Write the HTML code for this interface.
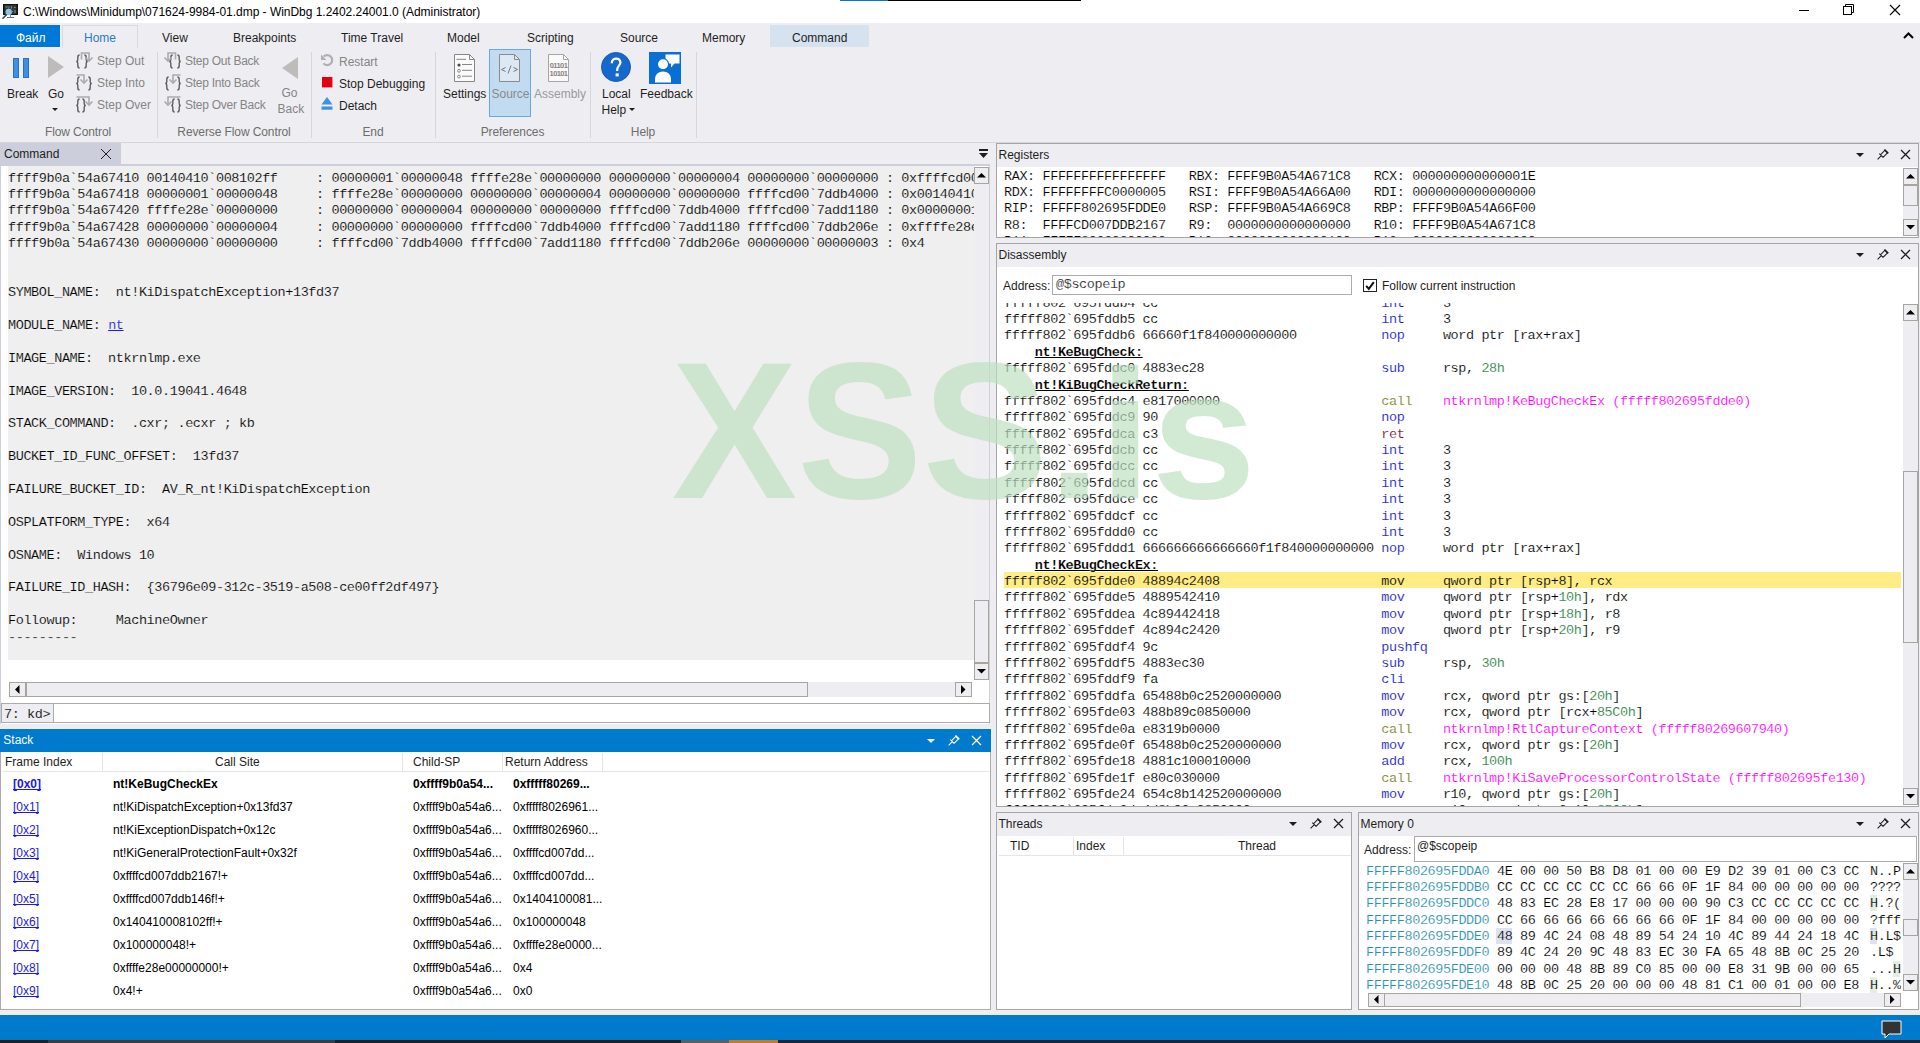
<!DOCTYPE html><html><head><meta charset="utf-8"><style>
*{margin:0;padding:0;box-sizing:border-box}
html,body{width:1920px;height:1043px;overflow:hidden;background:#EEEEF2;position:relative}
body{font-family:"Liberation Sans", sans-serif;font-size:12px;color:#1E1E1E}
.t{position:absolute;white-space:pre;line-height:16px}
.m{position:absolute;white-space:pre;font-family:"Liberation Mono", monospace;font-size:13.5px;letter-spacing:-0.4px;line-height:16px;color:#000;-webkit-text-stroke:0.15px var(--bg,#fff)}
.ab{position:absolute}
svg{position:absolute;overflow:visible}
.sb{position:absolute;background:#EEEEF2;border:1px solid #A9A59E}
</style></head><body>
<div class="ab" style="left:0px;top:0px;width:1920px;height:23px;background:#FFFFFF"></div>
<div class="ab" style="left:840px;top:0px;width:48px;height:1px;background:#0078D7"></div>
<div class="ab" style="left:888px;top:0px;width:193px;height:1px;background:#000"></div>
<svg style="left:0;top:0" width="22" height="22"><rect x="3" y="4" width="15" height="11" fill="#111"/><rect x="4.5" y="5" width="12" height="9" fill="#2E3A38"/><path d="M5.5 7H7.5M9 6.5V8.5M11.5 6.5V8.5M14 7.5H15.5M12 11.5H13M15 10V13" stroke="#9A9A9A" stroke-width="0.9"/><rect x="7" y="17" width="7" height="1" fill="#5A6E96"/><rect x="10" y="15" width="1" height="2" fill="#8090B0"/><circle cx="8.7" cy="12" r="3.2" fill="#8EC3E8"/><path d="M6.6 14.6L2.5 18.7" stroke="#444" stroke-width="1.5"/></svg>
<div class="t" style="left:23px;top:4px;color:#000;font-size:12px;letter-spacing:-0.03px">C:\Windows\Minidump\071624-9984-01.dmp - WinDbg 1.2402.24001.0 (Administrator)</div>
<div class="ab" style="left:1799px;top:10px;width:10px;height:1px;background:#000"></div>
<svg style="left:1843px;top:4px" width="12" height="12"><rect x="0.5" y="2.5" width="8" height="8" fill="none" stroke="#000"/><path d="M2.5 2.5V0.5H10.5V8.5H8.5" fill="none" stroke="#000"/></svg>
<svg style="left:1890px;top:5px" width="11" height="11"><path d="M0 0L10 10M10 0L0 10" stroke="#000" stroke-width="1.1"/></svg>
<div class="ab" style="left:0px;top:25px;width:60px;height:22px;background:#0078D7"></div>
<div class="t" style="left:16px;top:30px;color:#fff">Файл</div>
<div class="ab" style="left:62px;top:25px;width:76px;height:23px;background:#EEEEF2;border:1px solid #DADBE0;border-bottom:none"></div>
<div class="t" style="left:84px;top:30px;color:#2A7AC6">Home</div>
<div class="t" style="left:162px;top:30px;color:#1E1E1E">View</div>
<div class="t" style="left:233px;top:30px;color:#1E1E1E">Breakpoints</div>
<div class="t" style="left:341px;top:30px;color:#1E1E1E">Time Travel</div>
<div class="t" style="left:447px;top:30px;color:#1E1E1E">Model</div>
<div class="t" style="left:527px;top:30px;color:#1E1E1E">Scripting</div>
<div class="t" style="left:620px;top:30px;color:#1E1E1E">Source</div>
<div class="t" style="left:702px;top:30px;color:#1E1E1E">Memory</div>
<div class="ab" style="left:770px;top:25px;width:99px;height:22px;background:#D6E2F0"></div>
<div class="t" style="left:792px;top:30px;color:#1E1E1E">Command</div>
<svg style="left:1903px;top:32px" width="11" height="8"><path d="M1 6L5.5 1.5L10 6" fill="none" stroke="#000" stroke-width="2"/></svg>
<div class="ab" style="left:0px;top:142px;width:1920px;height:1px;background:#D6D6DC"></div>
<div class="ab" style="left:157px;top:52px;width:1px;height:86px;background:#D6D6DB"></div>
<div class="ab" style="left:311px;top:52px;width:1px;height:86px;background:#D6D6DB"></div>
<div class="ab" style="left:435px;top:52px;width:1px;height:86px;background:#D6D6DB"></div>
<div class="ab" style="left:590px;top:52px;width:1px;height:86px;background:#D6D6DB"></div>
<div class="ab" style="left:696px;top:52px;width:1px;height:86px;background:#D6D6DB"></div>
<div class="t" style="left:-22px;top:123.5px;width:200px;text-align:center;color:#6D6D6D;letter-spacing:-0.1px">Flow Control</div>
<div class="t" style="left:134px;top:123.5px;width:200px;text-align:center;color:#6D6D6D;letter-spacing:-0.1px">Reverse Flow Control</div>
<div class="t" style="left:273px;top:123.5px;width:200px;text-align:center;color:#6D6D6D;letter-spacing:-0.1px">End</div>
<div class="t" style="left:412.5px;top:123.5px;width:200px;text-align:center;color:#6D6D6D;letter-spacing:-0.1px">Preferences</div>
<div class="t" style="left:543px;top:123.5px;width:200px;text-align:center;color:#6D6D6D;letter-spacing:-0.1px">Help</div>
<div class="ab" style="left:13px;top:58px;width:6px;height:20px;background:#3D90E3;border:1px solid #2C6FBF"></div>
<div class="ab" style="left:23px;top:58px;width:6px;height:20px;background:#3D90E3;border:1px solid #2C6FBF"></div>
<div class="t" style="left:7px;top:85.5px;color:#1E1E1E">Break</div>
<svg style="left:48px;top:56px" width="17" height="23"><path d="M0 0L16 11L0 22Z" fill="#BEBBBB"/></svg>
<div class="t" style="left:48px;top:85.5px;color:#1E1E1E">Go</div>
<svg style="left:52px;top:108px" width="7" height="4"><path d="M0 0H6L3 3Z" fill="#1E1E1E"/></svg>
<svg style="left:0;top:0" width="1920" height="150"><g><path d="M79.6 55C78 55 77.8 56 77.8 57.5V59.8C77.8 60.9 77.2 61.5 76.2 61.5C77.2 61.5 77.8 62.1 77.8 63.2V65.5C77.8 67 78 68 79.6 68" fill="none" stroke="#5E5E5E" stroke-width="1.4"/><path d="M84.4 55C86 55 86.2 56 86.2 57.5V59.8C86.2 60.9 86.8 61.5 87.8 61.5C86.8 61.5 86.2 62.1 86.2 63.2V65.5C86.2 67 86 68 84.4 68" fill="none" stroke="#5E5E5E" stroke-width="1.4"/><path d="M81.5 59.5 L81.5 53 L89 53 L89 60" fill="none" stroke="#ABABAB" stroke-width="1.6"/><path d="M85.5 57.5L89 61L92.5 57.5" fill="none" stroke="#ABABAB" stroke-width="1.6"/><path d="M79.6 77C78 77 77.8 78 77.8 79.5V81.8C77.8 82.9 77.2 83.5 76.2 83.5C77.2 83.5 77.8 84.1 77.8 85.2V87.5C77.8 89 78 90 79.6 90" fill="none" stroke="#5E5E5E" stroke-width="1.4"/><path d="M88.4 77C90 77 90.2 78 90.2 79.5V81.8C90.2 82.9 90.8 83.5 91.8 83.5C90.8 83.5 90.2 84.1 90.2 85.2V87.5C90.2 89 90 90 88.4 90" fill="none" stroke="#5E5E5E" stroke-width="1.4"/><path d="M76.5 75 L84 75 L84 82" fill="none" stroke="#ABABAB" stroke-width="1.6"/><path d="M80.5 79.5L84 83L87.5 79.5" fill="none" stroke="#ABABAB" stroke-width="1.6"/><path d="M79.6 99C78 99 77.8 100 77.8 101.5V103.8C77.8 104.9 77.2 105.5 76.2 105.5C77.2 105.5 77.8 106.1 77.8 107.2V109.5C77.8 111 78 112 79.6 112" fill="none" stroke="#5E5E5E" stroke-width="1.4"/><path d="M82.4 99C84 99 84.2 100 84.2 101.5V103.8C84.2 104.9 84.8 105.5 85.8 105.5C84.8 105.5 84.2 106.1 84.2 107.2V109.5C84.2 111 84 112 82.4 112" fill="none" stroke="#5E5E5E" stroke-width="1.4"/><path d="M76.5 97 L89 97 L89 104" fill="none" stroke="#ABABAB" stroke-width="1.6"/><path d="M85.5 101.5L89 105L92.5 101.5" fill="none" stroke="#ABABAB" stroke-width="1.6"/></g></svg>
<svg style="left:0;top:0" width="1920" height="150"><g transform="translate(257,0) scale(-1,1)"><path d="M79.6 55C78 55 77.8 56 77.8 57.5V59.8C77.8 60.9 77.2 61.5 76.2 61.5C77.2 61.5 77.8 62.1 77.8 63.2V65.5C77.8 67 78 68 79.6 68" fill="none" stroke="#5E5E5E" stroke-width="1.4"/><path d="M84.4 55C86 55 86.2 56 86.2 57.5V59.8C86.2 60.9 86.8 61.5 87.8 61.5C86.8 61.5 86.2 62.1 86.2 63.2V65.5C86.2 67 86 68 84.4 68" fill="none" stroke="#5E5E5E" stroke-width="1.4"/><path d="M81.5 59.5 L81.5 53 L89 53 L89 60" fill="none" stroke="#ABABAB" stroke-width="1.6"/><path d="M85.5 57.5L89 61L92.5 57.5" fill="none" stroke="#ABABAB" stroke-width="1.6"/><path d="M79.6 77C78 77 77.8 78 77.8 79.5V81.8C77.8 82.9 77.2 83.5 76.2 83.5C77.2 83.5 77.8 84.1 77.8 85.2V87.5C77.8 89 78 90 79.6 90" fill="none" stroke="#5E5E5E" stroke-width="1.4"/><path d="M88.4 77C90 77 90.2 78 90.2 79.5V81.8C90.2 82.9 90.8 83.5 91.8 83.5C90.8 83.5 90.2 84.1 90.2 85.2V87.5C90.2 89 90 90 88.4 90" fill="none" stroke="#5E5E5E" stroke-width="1.4"/><path d="M76.5 75 L84 75 L84 82" fill="none" stroke="#ABABAB" stroke-width="1.6"/><path d="M80.5 79.5L84 83L87.5 79.5" fill="none" stroke="#ABABAB" stroke-width="1.6"/><path d="M79.6 99C78 99 77.8 100 77.8 101.5V103.8C77.8 104.9 77.2 105.5 76.2 105.5C77.2 105.5 77.8 106.1 77.8 107.2V109.5C77.8 111 78 112 79.6 112" fill="none" stroke="#5E5E5E" stroke-width="1.4"/><path d="M82.4 99C84 99 84.2 100 84.2 101.5V103.8C84.2 104.9 84.8 105.5 85.8 105.5C84.8 105.5 84.2 106.1 84.2 107.2V109.5C84.2 111 84 112 82.4 112" fill="none" stroke="#5E5E5E" stroke-width="1.4"/><path d="M76.5 97 L89 97 L89 104" fill="none" stroke="#ABABAB" stroke-width="1.6"/><path d="M85.5 101.5L89 105L92.5 101.5" fill="none" stroke="#ABABAB" stroke-width="1.6"/></g></svg>
<div class="t" style="left:97px;top:53px;color:#858585">Step Out</div>
<div class="t" style="left:97px;top:75px;color:#858585">Step Into</div>
<div class="t" style="left:97px;top:97px;color:#858585">Step Over</div>
<div class="t" style="left:185px;top:53px;color:#858585;letter-spacing:-0.25px">Step Out Back</div>
<div class="t" style="left:185px;top:75px;color:#858585;letter-spacing:-0.25px">Step Into Back</div>
<div class="t" style="left:185px;top:97px;color:#858585;letter-spacing:-0.25px">Step Over Back</div>
<svg style="left:282px;top:57px" width="17" height="23"><path d="M16 0L0 11L16 22Z" fill="#BEBBBB"/></svg>
<div class="t" style="left:281.5px;top:85px;color:#858585">Go</div>
<div class="t" style="left:277.5px;top:100.8px;color:#858585">Back</div>
<svg style="left:316px;top:50px" width="24" height="64"><path d="M7.6 6.6A5 5 0 1 1 7.4 13.4" fill="none" stroke="#B0B0B0" stroke-width="2.2"/><path d="M5 4.5V10H10.5Z" fill="#B0B0B0"/><rect x="6" y="27" width="10.4" height="10.4" fill="#E3000F"/><path d="M11 47L16.5 54.5H5.5Z" fill="#3A92E4"/><rect x="5.5" y="56.5" width="11" height="3.2" fill="#3A92E4"/></svg>
<div class="t" style="left:339px;top:53.5px;color:#858585">Restart</div>
<div class="t" style="left:339px;top:75.5px;color:#1E1E1E">Stop Debugging</div>
<div class="t" style="left:339px;top:97.5px;color:#1E1E1E">Detach</div>
<div class="ab" style="left:489px;top:49px;width:42px;height:68px;background:#C3DBF1;border:1px solid #64A9E8"></div>
<svg style="left:454px;top:54px" width="22" height="29"><path d="M0.5 0.5H15.5L20.5 5.5V27.5H0.5Z" fill="#FAFAFA" stroke="#8A8585"/><path d="M15.5 0.5V5.5H20.5" fill="none" stroke="#8A8585"/><path d="M2.5 5.3H12" stroke="#8A8585"/><circle cx="5" cy="11" r="1.6" fill="#4A4A4A"/><circle cx="5" cy="16.8" r="1.4" fill="none" stroke="#8A8585"/><circle cx="5" cy="22.6" r="1.4" fill="none" stroke="#8A8585"/><path d="M8 10.5H18M8 16.3H18M8 22.2H18" stroke="#8A8585"/></svg>
<div class="t" style="left:443px;top:85.5px;color:#1E1E1E">Settings</div>
<svg style="left:499px;top:54px" width="22" height="29"><path d="M0.5 0.5H15.5L20.5 5.5V27.5H0.5Z" fill="#DCE8F3" stroke="#8E8A8A"/><path d="M15.5 0.5V5.5H20.5" fill="none" stroke="#8E8A8A"/><path d="M6.5 13.5L2.5 15.5L6.5 17.5M14.5 13.5L18.5 15.5L14.5 17.5M12 11.5L9 19.5" fill="none" stroke="#777" stroke-width="1"/></svg>
<div class="t" style="left:491.5px;top:85.5px;color:#8A8A8A">Source</div>
<svg style="left:548px;top:54px" width="22" height="29"><path d="M0.5 0.5H15.5L20.5 5.5V27.5H0.5Z" fill="#FAFAFA" stroke="#A8A4A4"/><path d="M15.5 0.5V5.5H20.5" fill="none" stroke="#A8A4A4"/><text x="10.5" y="13.5" text-anchor="middle" font-family="Liberation Sans" font-weight="bold" font-size="7.5" fill="#8A8282" letter-spacing="-0.6">01101</text><text x="10.5" y="21.5" text-anchor="middle" font-family="Liberation Sans" font-weight="bold" font-size="7.5" fill="#8A8282" letter-spacing="-0.6">10101</text></svg>
<div class="t" style="left:534px;top:85.5px;color:#9A9A9A">Assembly</div>
<svg style="left:601px;top:52px" width="31" height="31"><circle cx="15" cy="15" r="14.6" fill="#1568CC" stroke="#1A4FA0" stroke-width="0.8"/><path d="M10.8 11.2C10.8 8.2 12.8 6.6 15.2 6.6C17.6 6.6 19.4 8.2 19.4 10.6C19.4 13.4 16.2 14 16.2 17.6V19" fill="none" stroke="#fff" stroke-width="2.3"/><rect x="14.6" y="21.4" width="3.2" height="3" fill="#fff"/></svg>
<div class="t" style="left:602px;top:85.5px;color:#1E1E1E">Local</div>
<div class="t" style="left:601.5px;top:101.5px;color:#1E1E1E">Help</div>
<svg style="left:629px;top:108px" width="7" height="4"><path d="M0 0H6L3 3Z" fill="#1E1E1E"/></svg>
<svg style="left:649px;top:52px" width="33" height="33"><rect width="32" height="32" fill="#0A6FD5"/><path d="M16.5 2.5H30.5V11.5H25.5L22 15.5V11.5H16.5Z" fill="#fff"/><circle cx="14" cy="12.3" r="6.2" fill="#0A6FD5"/><circle cx="14" cy="12.3" r="5" fill="#fff"/><path d="M6 30.5V27C6 22.5 9.5 19.5 14 19.5C18.5 19.5 22 22.5 22 27V30.5Z" fill="#fff"/></svg>
<div class="t" style="left:640px;top:85.5px;color:#1E1E1E">Feedback</div>
<div class="ab" style="left:0px;top:143px;width:121px;height:21px;background:#CCCEDB"></div>
<div class="t" style="left:4px;top:146px;color:#1E1E1E">Command</div>
<svg style="left:101px;top:149px" width="11" height="11"><path d="M0 0L10 10M10 0L0 10" stroke="#1E1E1E" stroke-width="1"/></svg>
<svg style="left:979px;top:149px" width="10" height="10"><rect x="0" y="0" width="9" height="2" fill="#1E1E1E"/><path d="M0 4H9L4.5 9Z" fill="#1E1E1E"/></svg>
<div class="ab" style="left:0px;top:164px;width:990px;height:2px;background:#CCCEDB"></div>
<div class="ab" style="left:0px;top:166px;width:990px;height:558px;background:#FFFFFF;border-left:1px solid #CCCEDB;border-right:1px solid #D0D0D0"></div>
<div class="ab" style="left:8px;top:166px;width:967px;height:494px;background:#EFEFEF"></div>
<div class="ab" style="left:8px;top:166px;width:966px;height:494px;overflow:hidden;--bg:#EFEFEF">
<div class="m" style="left:0px;top:4.60px">ffff9b0a`54a67410 00140410`008102ff     : 00000001`00000048 ffffe28e`00000000 00000000`00000004 00000000`00000000 : 0xffffcd00`</div>
<div class="m" style="left:0px;top:20.99px">ffff9b0a`54a67418 00000001`00000048     : ffffe28e`00000000 00000000`00000004 00000000`00000000 ffffcd00`7ddb4000 : 0x00140410`</div>
<div class="m" style="left:0px;top:37.38px">ffff9b0a`54a67420 ffffe28e`00000000     : 00000000`00000004 00000000`00000000 ffffcd00`7ddb4000 ffffcd00`7add1180 : 0x00000001`</div>
<div class="m" style="left:0px;top:53.77px">ffff9b0a`54a67428 00000000`00000004     : 00000000`00000000 ffffcd00`7ddb4000 ffffcd00`7add1180 ffffcd00`7ddb206e : 0xffffe28e`</div>
<div class="m" style="left:0px;top:70.16px">ffff9b0a`54a67430 00000000`00000000     : ffffcd00`7ddb4000 ffffcd00`7add1180 ffffcd00`7ddb206e 00000000`00000003 : 0x4</div>
<div class="m" style="left:0px;top:119.33px">SYMBOL_NAME:  nt!KiDispatchException+13fd37</div>
<div class="m" style="left:0px;top:152.11px">MODULE_NAME: <u style="color:#1A1AE6;text-decoration-color:#1A1AE6">nt</u></div>
<div class="m" style="left:0px;top:184.89px">IMAGE_NAME:  ntkrnlmp.exe</div>
<div class="m" style="left:0px;top:217.67px">IMAGE_VERSION:  10.0.19041.4648</div>
<div class="m" style="left:0px;top:250.45px">STACK_COMMAND:  .cxr; .ecxr ; kb</div>
<div class="m" style="left:0px;top:283.23px">BUCKET_ID_FUNC_OFFSET:  13fd37</div>
<div class="m" style="left:0px;top:316.01px">FAILURE_BUCKET_ID:  AV_R_nt!KiDispatchException</div>
<div class="m" style="left:0px;top:348.79px">OSPLATFORM_TYPE:  x64</div>
<div class="m" style="left:0px;top:381.57px">OSNAME:  Windows 10</div>
<div class="m" style="left:0px;top:414.35px">FAILURE_ID_HASH:  {36796e09-312c-3519-a508-ce00ff2df497}</div>
<div class="m" style="left:0px;top:447.13px">Followup:     MachineOwner</div>
<div class="m" style="left:0px;top:463.52px">---------</div>
</div>
<div class="ab" style="left:974px;top:167px;width:15px;height:513px;background:#EEEEF2"></div>
<div class="sb" style="left:974px;top:167px;width:15px;height:17px"></div>
<svg style="left:977px;top:173px" width="9" height="5"><path d="M0 4.5H9L4.5 0Z" fill="#000"/></svg>
<div class="sb" style="left:974px;top:600px;width:15px;height:63px"></div>
<div class="sb" style="left:974px;top:663px;width:15px;height:17px"></div>
<svg style="left:977px;top:669px" width="9" height="5"><path d="M0 0H9L4.5 4.5Z" fill="#000"/></svg>
<div class="ab" style="left:9px;top:682px;width:963px;height:15px;background:#EEEEF2"></div>
<div class="sb" style="left:9px;top:682px;width:17px;height:15px"></div>
<svg style="left:15px;top:685px" width="5" height="9"><path d="M4.5 0V9L0 4.5Z" fill="#000"/></svg>
<div class="sb" style="left:26px;top:682px;width:782px;height:15px"></div>
<div class="sb" style="left:955px;top:682px;width:17px;height:15px"></div>
<svg style="left:961px;top:685px" width="5" height="9"><path d="M0 0V9L4.5 4.5Z" fill="#000"/></svg>
<div class="ab" style="left:1px;top:703px;width:989px;height:20px;background:#fff;border:1px solid #ABABAB"></div>
<div class="ab" style="left:1px;top:703px;width:53px;height:20px;background:#EEEEF2;border:1px solid #ABABAB"></div>
<div class="m" style="left:4px;top:706.5px;color:#000;--bg:#EEEEF2">7: kd></div>
<div class="ab" style="left:0px;top:729px;width:991px;height:281px;background:#fff;border:1px solid #ABABAB;border-top:none"></div>
<div class="ab" style="left:0px;top:729px;width:991px;height:23px;background:#007ACC"></div>
<div class="t" style="left:3.3px;top:732px;color:#fff">Stack</div>
<svg style="left:926px;top:729px" width="64" height="24"><path d="M1 10H9L5 14Z" fill="#fff"/><g transform="translate(22,5)" fill="none" stroke="#fff" stroke-width="1.1"><path d="M0.6 11.4L4.3 7.7M2.3 5.7L6.3 9.7M3.4 6.8L8 2.2L10.6 4.8L6 9.4"/><path d="M7.4 1.6L11.2 5.4" stroke-width="1.6"/></g><path d="M46 7L55 16M55 7L46 16" stroke="#fff" stroke-width="1.3"/></svg>
<div class="t" style="left:5px;top:754px;color:#1E1E1E">Frame Index</div>
<div class="t" style="left:215px;top:754px;color:#1E1E1E">Call Site</div>
<div class="t" style="left:413px;top:754px;color:#1E1E1E">Child-SP</div>
<div class="t" style="left:505px;top:754px;color:#1E1E1E">Return Address</div>
<div class="ab" style="left:102px;top:753px;width:1px;height:18px;background:#E5E5E5"></div>
<div class="ab" style="left:402px;top:753px;width:1px;height:18px;background:#E5E5E5"></div>
<div class="ab" style="left:502px;top:753px;width:1px;height:18px;background:#E5E5E5"></div>
<div class="ab" style="left:602px;top:753px;width:1px;height:18px;background:#E5E5E5"></div>
<div class="ab" style="left:3px;top:771px;width:986px;height:1px;background:#E5E5E5"></div>
<div class="t" style="left:13px;top:776px;font-weight:bold;color:#1A1AE6;text-decoration:underline;text-decoration-skip-ink:none">[0x0]</div>
<div class="t" style="left:113px;top:776px;font-weight:bold;color:#000">nt!KeBugCheckEx</div>
<div class="t" style="left:413px;top:776px;font-weight:bold;color:#000">0xffff9b0a54...</div>
<div class="t" style="left:513px;top:776px;font-weight:bold;color:#000">0xfffff80269...</div>
<div class="t" style="left:13px;top:799px;color:#1A1AE6;text-decoration:underline;text-decoration-skip-ink:none">[0x1]</div>
<div class="t" style="left:113px;top:799px;color:#000">nt!KiDispatchException+0x13fd37</div>
<div class="t" style="left:413px;top:799px;color:#000">0xffff9b0a54a6...</div>
<div class="t" style="left:513px;top:799px;color:#000">0xfffff8026961...</div>
<div class="t" style="left:13px;top:822px;color:#1A1AE6;text-decoration:underline;text-decoration-skip-ink:none">[0x2]</div>
<div class="t" style="left:113px;top:822px;color:#000">nt!KiExceptionDispatch+0x12c</div>
<div class="t" style="left:413px;top:822px;color:#000">0xffff9b0a54a6...</div>
<div class="t" style="left:513px;top:822px;color:#000">0xfffff8026960...</div>
<div class="t" style="left:13px;top:845px;color:#1A1AE6;text-decoration:underline;text-decoration-skip-ink:none">[0x3]</div>
<div class="t" style="left:113px;top:845px;color:#000">nt!KiGeneralProtectionFault+0x32f</div>
<div class="t" style="left:413px;top:845px;color:#000">0xffff9b0a54a6...</div>
<div class="t" style="left:513px;top:845px;color:#000">0xffffcd007dd...</div>
<div class="t" style="left:13px;top:868px;color:#1A1AE6;text-decoration:underline;text-decoration-skip-ink:none">[0x4]</div>
<div class="t" style="left:113px;top:868px;color:#000">0xffffcd007ddb2167!+</div>
<div class="t" style="left:413px;top:868px;color:#000">0xffff9b0a54a6...</div>
<div class="t" style="left:513px;top:868px;color:#000">0xffffcd007dd...</div>
<div class="t" style="left:13px;top:891px;color:#1A1AE6;text-decoration:underline;text-decoration-skip-ink:none">[0x5]</div>
<div class="t" style="left:113px;top:891px;color:#000">0xffffcd007ddb146f!+</div>
<div class="t" style="left:413px;top:891px;color:#000">0xffff9b0a54a6...</div>
<div class="t" style="left:513px;top:891px;color:#000">0x1404100081...</div>
<div class="t" style="left:13px;top:914px;color:#1A1AE6;text-decoration:underline;text-decoration-skip-ink:none">[0x6]</div>
<div class="t" style="left:113px;top:914px;color:#000">0x140410008102ff!+</div>
<div class="t" style="left:413px;top:914px;color:#000">0xffff9b0a54a6...</div>
<div class="t" style="left:513px;top:914px;color:#000">0x100000048</div>
<div class="t" style="left:13px;top:937px;color:#1A1AE6;text-decoration:underline;text-decoration-skip-ink:none">[0x7]</div>
<div class="t" style="left:113px;top:937px;color:#000">0x100000048!+</div>
<div class="t" style="left:413px;top:937px;color:#000">0xffff9b0a54a6...</div>
<div class="t" style="left:513px;top:937px;color:#000">0xffffe28e0000...</div>
<div class="t" style="left:13px;top:960px;color:#1A1AE6;text-decoration:underline;text-decoration-skip-ink:none">[0x8]</div>
<div class="t" style="left:113px;top:960px;color:#000">0xffffe28e00000000!+</div>
<div class="t" style="left:413px;top:960px;color:#000">0xffff9b0a54a6...</div>
<div class="t" style="left:513px;top:960px;color:#000">0x4</div>
<div class="t" style="left:13px;top:983px;color:#1A1AE6;text-decoration:underline;text-decoration-skip-ink:none">[0x9]</div>
<div class="t" style="left:113px;top:983px;color:#000">0x4!+</div>
<div class="t" style="left:413px;top:983px;color:#000">0xffff9b0a54a6...</div>
<div class="t" style="left:513px;top:983px;color:#000">0x0</div>
<div class="ab" style="left:996px;top:143px;width:923px;height:95px;background:#fff;border:1px solid #A5A5A5"></div>
<div class="ab" style="left:997px;top:144px;width:921px;height:23px;background:#EEEEF2"></div>
<div class="t" style="left:998.5px;top:147px;color:#1E1E1E">Registers</div>
<svg style="left:1855px;top:143px" width="64" height="24"><path d="M1 10H9L5 14Z" fill="#1E1E1E"/><g transform="translate(22,5)" fill="none" stroke="#1E1E1E" stroke-width="1.1"><path d="M0.6 11.4L4.3 7.7M2.3 5.7L6.3 9.7M3.4 6.8L8 2.2L10.6 4.8L6 9.4"/><path d="M7.4 1.6L11.2 5.4" stroke-width="1.6"/></g><path d="M46 7L55 16M55 7L46 16" stroke="#1E1E1E" stroke-width="1.3"/></svg>
<div class="ab" style="left:1004px;top:167px;width:895px;height:70px;overflow:hidden">
<div class="m" style="left:0px;top:1.50px">RAX: FFFFFFFFFFFFFFFF   RBX: FFFF9B0A54A671C8   RCX: 000000000000001E</div>
<div class="m" style="left:0px;top:17.88px">RDX: FFFFFFFFC0000005   RSI: FFFF9B0A54A66A00   RDI: 0000000000000000</div>
<div class="m" style="left:0px;top:34.26px">RIP: FFFFF802695FDDE0   RSP: FFFF9B0A54A669C8   RBP: FFFF9B0A54A66F00</div>
<div class="m" style="left:0px;top:50.64px">R8:  FFFFCD007DDB2167   R9:  0000000000000000   R10: FFFF9B0A54A671C8</div>
<div class="m" style="left:0px;top:67.02px">R11: FFFFF80269600000   R12: 0000000000000100   R13: 0000000000000000</div>
</div>
<div class="ab" style="left:1903px;top:168px;width:15px;height:68px;background:#EEEEF2"></div>
<div class="sb" style="left:1903px;top:168px;width:15px;height:17px"></div>
<svg style="left:1906px;top:174px" width="9" height="5"><path d="M0 4.5H9L4.5 0Z" fill="#000"/></svg>
<div class="sb" style="left:1903px;top:185px;width:15px;height:21px"></div>
<div class="sb" style="left:1903px;top:219px;width:15px;height:17px"></div>
<svg style="left:1906px;top:225px" width="9" height="5"><path d="M0 0H9L4.5 4.5Z" fill="#000"/></svg>
<div class="ab" style="left:996px;top:243px;width:923px;height:564px;background:#fff;border:1px solid #A5A5A5"></div>
<div class="ab" style="left:997px;top:244px;width:921px;height:23px;background:#EEEEF2"></div>
<div class="t" style="left:998.5px;top:247px;color:#1E1E1E">Disassembly</div>
<svg style="left:1855px;top:243px" width="64" height="24"><path d="M1 10H9L5 14Z" fill="#1E1E1E"/><g transform="translate(22,5)" fill="none" stroke="#1E1E1E" stroke-width="1.1"><path d="M0.6 11.4L4.3 7.7M2.3 5.7L6.3 9.7M3.4 6.8L8 2.2L10.6 4.8L6 9.4"/><path d="M7.4 1.6L11.2 5.4" stroke-width="1.6"/></g><path d="M46 7L55 16M55 7L46 16" stroke="#1E1E1E" stroke-width="1.3"/></svg>
<div class="ab" style="left:997px;top:267px;width:920px;height:30px;background:#fff"></div>
<div class="t" style="left:1003px;top:278px;color:#1E1E1E">Address:</div>
<div class="ab" style="left:1052px;top:275px;width:300px;height:20px;background:#fff;border:1px solid #ABABAB"></div>
<div class="m" style="left:1056px;top:277px;color:#1E1E1E">@$scopeip</div>
<div class="ab" style="left:1363px;top:279px;width:14px;height:13px;background:#fff;border:1px solid #222"></div>
<svg style="left:1365px;top:281px" width="10" height="10"><path d="M1.2 4.8L3.8 7.8L8.8 1.2" fill="none" stroke="#111" stroke-width="2"/></svg>
<div class="t" style="left:1382px;top:278px;color:#1E1E1E">Follow current instruction</div>
<div class="ab" style="left:997px;top:303px;width:904px;height:503px;overflow:hidden">
<div class="m" style="left:7px;top:-7.38px">fffff802`695fddb4 cc</div>
<div class="m" style="left:384.3px;top:-7.38px;color:#1212C4">int</div>
<div class="m" style="left:445.9px;top:-7.38px">3</div>
<div class="m" style="left:7px;top:9.00px">fffff802`695fddb5 cc</div>
<div class="m" style="left:384.3px;top:9.00px;color:#1212C4">int</div>
<div class="m" style="left:445.9px;top:9.00px">3</div>
<div class="m" style="left:7px;top:25.38px">fffff802`695fddb6 66660f1f840000000000</div>
<div class="m" style="left:384.3px;top:25.38px;color:#1212C4">nop</div>
<div class="m" style="left:445.9px;top:25.38px">word ptr [rax+rax]</div>
<div class="m" style="left:37.8px;top:41.76px;font-weight:bold;text-decoration:underline;text-decoration-color:#000;text-decoration-skip-ink:none">nt!KeBugCheck:</div>
<div class="m" style="left:7px;top:58.14px">fffff802`695fddc0 4883ec28</div>
<div class="m" style="left:384.3px;top:58.14px;color:#1212C4">sub</div>
<div class="m" style="left:445.9px;top:58.14px">rsp, <span style="color:#1F8040">28h</span></div>
<div class="m" style="left:37.8px;top:74.52px;font-weight:bold;text-decoration:underline;text-decoration-color:#000;text-decoration-skip-ink:none">nt!KiBugCheckReturn:</div>
<div class="m" style="left:7px;top:90.90px">fffff802`695fddc4 e817000000</div>
<div class="m" style="left:384.3px;top:90.90px;color:#7D7D26">call</div>
<div class="m" style="left:445.9px;top:90.90px"><span style="color:#FF00FF">ntkrnlmp!KeBugCheckEx (fffff802695fdde0)</span></div>
<div class="m" style="left:7px;top:107.28px">fffff802`695fddc9 90</div>
<div class="m" style="left:384.3px;top:107.28px;color:#1212C4">nop</div>
<div class="m" style="left:7px;top:123.66px">fffff802`695fddca c3</div>
<div class="m" style="left:384.3px;top:123.66px;color:#6E0A3C">ret</div>
<div class="m" style="left:7px;top:140.04px">fffff802`695fddcb cc</div>
<div class="m" style="left:384.3px;top:140.04px;color:#1212C4">int</div>
<div class="m" style="left:445.9px;top:140.04px">3</div>
<div class="m" style="left:7px;top:156.42px">fffff802`695fddcc cc</div>
<div class="m" style="left:384.3px;top:156.42px;color:#1212C4">int</div>
<div class="m" style="left:445.9px;top:156.42px">3</div>
<div class="m" style="left:7px;top:172.80px">fffff802`695fddcd cc</div>
<div class="m" style="left:384.3px;top:172.80px;color:#1212C4">int</div>
<div class="m" style="left:445.9px;top:172.80px">3</div>
<div class="m" style="left:7px;top:189.18px">fffff802`695fddce cc</div>
<div class="m" style="left:384.3px;top:189.18px;color:#1212C4">int</div>
<div class="m" style="left:445.9px;top:189.18px">3</div>
<div class="m" style="left:7px;top:205.56px">fffff802`695fddcf cc</div>
<div class="m" style="left:384.3px;top:205.56px;color:#1212C4">int</div>
<div class="m" style="left:445.9px;top:205.56px">3</div>
<div class="m" style="left:7px;top:221.94px">fffff802`695fddd0 cc</div>
<div class="m" style="left:384.3px;top:221.94px;color:#1212C4">int</div>
<div class="m" style="left:445.9px;top:221.94px">3</div>
<div class="m" style="left:7px;top:238.32px">fffff802`695fddd1 666666666666660f1f840000000000</div>
<div class="m" style="left:384.3px;top:238.32px;color:#1212C4">nop</div>
<div class="m" style="left:445.9px;top:238.32px">word ptr [rax+rax]</div>
<div class="m" style="left:37.8px;top:254.70px;font-weight:bold;text-decoration:underline;text-decoration-color:#000;text-decoration-skip-ink:none">nt!KeBugCheckEx:</div>
<div class="ab" style="left:7px;top:269.08px;width:897px;height:16px;background:#FFEC85"></div>
<div class="m" style="left:7px;top:271.08px;--bg:#FFEC85">fffff802`695fdde0 48894c2408</div>
<div class="m" style="left:384.3px;top:271.08px;color:#000;--bg:#FFEC85">mov</div>
<div class="m" style="left:445.9px;top:271.08px;--bg:#FFEC85">qword ptr [rsp+8], rcx</div>
<div class="m" style="left:7px;top:287.46px">fffff802`695fdde5 4889542410</div>
<div class="m" style="left:384.3px;top:287.46px;color:#1212C4">mov</div>
<div class="m" style="left:445.9px;top:287.46px">qword ptr [rsp+<span style="color:#1F8040">10h</span>], rdx</div>
<div class="m" style="left:7px;top:303.84px">fffff802`695fddea 4c89442418</div>
<div class="m" style="left:384.3px;top:303.84px;color:#1212C4">mov</div>
<div class="m" style="left:445.9px;top:303.84px">qword ptr [rsp+<span style="color:#1F8040">18h</span>], r8</div>
<div class="m" style="left:7px;top:320.22px">fffff802`695fddef 4c894c2420</div>
<div class="m" style="left:384.3px;top:320.22px;color:#1212C4">mov</div>
<div class="m" style="left:445.9px;top:320.22px">qword ptr [rsp+<span style="color:#1F8040">20h</span>], r9</div>
<div class="m" style="left:7px;top:336.60px">fffff802`695fddf4 9c</div>
<div class="m" style="left:384.3px;top:336.60px;color:#1212C4">pushfq</div>
<div class="m" style="left:7px;top:352.98px">fffff802`695fddf5 4883ec30</div>
<div class="m" style="left:384.3px;top:352.98px;color:#1212C4">sub</div>
<div class="m" style="left:445.9px;top:352.98px">rsp, <span style="color:#1F8040">30h</span></div>
<div class="m" style="left:7px;top:369.36px">fffff802`695fddf9 fa</div>
<div class="m" style="left:384.3px;top:369.36px;color:#1212C4">cli</div>
<div class="m" style="left:7px;top:385.74px">fffff802`695fddfa 65488b0c2520000000</div>
<div class="m" style="left:384.3px;top:385.74px;color:#1212C4">mov</div>
<div class="m" style="left:445.9px;top:385.74px">rcx, qword ptr gs:[<span style="color:#1F8040">20h</span>]</div>
<div class="m" style="left:7px;top:402.12px">fffff802`695fde03 488b89c0850000</div>
<div class="m" style="left:384.3px;top:402.12px;color:#1212C4">mov</div>
<div class="m" style="left:445.9px;top:402.12px">rcx, qword ptr [rcx+<span style="color:#1F8040">85C0h</span>]</div>
<div class="m" style="left:7px;top:418.50px">fffff802`695fde0a e8319b0000</div>
<div class="m" style="left:384.3px;top:418.50px;color:#7D7D26">call</div>
<div class="m" style="left:445.9px;top:418.50px"><span style="color:#FF00FF">ntkrnlmp!RtlCaptureContext (fffff80269607940)</span></div>
<div class="m" style="left:7px;top:434.88px">fffff802`695fde0f 65488b0c2520000000</div>
<div class="m" style="left:384.3px;top:434.88px;color:#1212C4">mov</div>
<div class="m" style="left:445.9px;top:434.88px">rcx, qword ptr gs:[<span style="color:#1F8040">20h</span>]</div>
<div class="m" style="left:7px;top:451.26px">fffff802`695fde18 4881c100010000</div>
<div class="m" style="left:384.3px;top:451.26px;color:#1212C4">add</div>
<div class="m" style="left:445.9px;top:451.26px">rcx, <span style="color:#1F8040">100h</span></div>
<div class="m" style="left:7px;top:467.64px">fffff802`695fde1f e80c030000</div>
<div class="m" style="left:384.3px;top:467.64px;color:#7D7D26">call</div>
<div class="m" style="left:445.9px;top:467.64px"><span style="color:#FF00FF">ntkrnlmp!KiSaveProcessorControlState (fffff802695fe130)</span></div>
<div class="m" style="left:7px;top:484.02px">fffff802`695fde24 654c8b142520000000</div>
<div class="m" style="left:384.3px;top:484.02px;color:#1212C4">mov</div>
<div class="m" style="left:445.9px;top:484.02px">r10, qword ptr gs:[<span style="color:#1F8040">20h</span>]</div>
<div class="m" style="left:7px;top:500.40px">fffff802`695fde2d 4d8b92c0850000</div>
<div class="m" style="left:384.3px;top:500.40px;color:#1212C4">mov</div>
<div class="m" style="left:445.9px;top:500.40px">r10, qword ptr [r10+<span style="color:#1F8040">85C0h</span>]</div>
</div>
<div class="ab" style="left:1901px;top:298px;width:17px;height:508px;background:#fff"></div>
<div class="ab" style="left:1903px;top:304px;width:15px;height:501px;background:#EEEEF2"></div>
<div class="sb" style="left:1903px;top:304px;width:15px;height:17px"></div>
<svg style="left:1906px;top:310px" width="9" height="5"><path d="M0 4.5H9L4.5 0Z" fill="#000"/></svg>
<div class="sb" style="left:1903px;top:471px;width:15px;height:172px"></div>
<div class="sb" style="left:1903px;top:788px;width:15px;height:17px"></div>
<svg style="left:1906px;top:794px" width="9" height="5"><path d="M0 0H9L4.5 4.5Z" fill="#000"/></svg>
<div class="ab" style="left:996px;top:812px;width:356px;height:198px;background:#fff;border:1px solid #A5A5A5"></div>
<div class="ab" style="left:997px;top:813px;width:354px;height:23px;background:#EEEEF2"></div>
<div class="t" style="left:998.5px;top:816px;color:#1E1E1E">Threads</div>
<svg style="left:1288px;top:812px" width="64" height="24"><path d="M1 10H9L5 14Z" fill="#1E1E1E"/><g transform="translate(22,5)" fill="none" stroke="#1E1E1E" stroke-width="1.1"><path d="M0.6 11.4L4.3 7.7M2.3 5.7L6.3 9.7M3.4 6.8L8 2.2L10.6 4.8L6 9.4"/><path d="M7.4 1.6L11.2 5.4" stroke-width="1.6"/></g><path d="M46 7L55 16M55 7L46 16" stroke="#1E1E1E" stroke-width="1.3"/></svg>
<div class="t" style="left:1010px;top:838px;color:#1E1E1E">TID</div>
<div class="t" style="left:1076px;top:838px;color:#1E1E1E">Index</div>
<div class="t" style="left:1238px;top:838px;color:#1E1E1E">Thread</div>
<div class="ab" style="left:1073px;top:837px;width:1px;height:18px;background:#E5E5E5"></div>
<div class="ab" style="left:1123px;top:837px;width:1px;height:18px;background:#E5E5E5"></div>
<div class="ab" style="left:999px;top:855px;width:352px;height:1px;background:#E5E5E5"></div>
<div class="ab" style="left:1358px;top:812px;width:561px;height:198px;background:#fff;border:1px solid #A5A5A5"></div>
<div class="ab" style="left:1359px;top:813px;width:559px;height:23px;background:#EEEEF2"></div>
<div class="t" style="left:1360.5px;top:816px;color:#1E1E1E">Memory 0</div>
<svg style="left:1855px;top:812px" width="64" height="24"><path d="M1 10H9L5 14Z" fill="#1E1E1E"/><g transform="translate(22,5)" fill="none" stroke="#1E1E1E" stroke-width="1.1"><path d="M0.6 11.4L4.3 7.7M2.3 5.7L6.3 9.7M3.4 6.8L8 2.2L10.6 4.8L6 9.4"/><path d="M7.4 1.6L11.2 5.4" stroke-width="1.6"/></g><path d="M46 7L55 16M55 7L46 16" stroke="#1E1E1E" stroke-width="1.3"/></svg>
<div class="t" style="left:1364px;top:842px;color:#1E1E1E">Address:</div>
<div class="ab" style="left:1414px;top:836px;width:503px;height:26px;background:#fff;border:1px solid #ABABAB"></div>
<div class="t" style="left:1417px;top:838px;color:#1E1E1E">@$scopeip</div>
<div class="ab" style="left:1359px;top:862px;width:542px;height:131px;overflow:hidden">
<div class="m" style="left:7px;top:1.70px;color:#2B91AF">FFFFF802695FDDA0</div>
<div class="m" style="left:138px;top:1.70px">4E 00 00 50 B8 D8 01 00 00 E9 D2 39 01 00 C3 CC</div>
<div class="m" style="left:511px;top:1.70px">N..P</div>
<div class="m" style="left:7px;top:18.00px;color:#2B91AF">FFFFF802695FDDB0</div>
<div class="m" style="left:138px;top:18.00px">CC CC CC CC CC CC 66 66 0F 1F 84 00 00 00 00 00</div>
<div class="m" style="left:511px;top:18.00px">????</div>
<div class="ab" style="left:511.0px;top:33.30px;width:7px;height:16px;background:#E2EEE2"></div>
<div class="m" style="left:7px;top:34.30px;color:#2B91AF">FFFFF802695FDDC0</div>
<div class="m" style="left:138px;top:34.30px">48 83 EC 28 E8 17 00 00 00 90 C3 CC CC CC CC CC</div>
<div class="m" style="left:511px;top:34.30px">H.?(</div>
<div class="m" style="left:7px;top:50.60px;color:#2B91AF">FFFFF802695FDDD0</div>
<div class="m" style="left:138px;top:50.60px">CC 66 66 66 66 66 66 66 0F 1F 84 00 00 00 00 00</div>
<div class="m" style="left:511px;top:50.60px">?fff</div>
<div class="ab" style="left:137px;top:65.90px;width:16px;height:16px;background:#DCE3EE"></div>
<div class="ab" style="left:511.0px;top:65.90px;width:7px;height:16px;background:#DCE3EE"></div>
<div class="m" style="left:7px;top:66.90px;color:#2B91AF">FFFFF802695FDDE0</div>
<div class="m" style="left:138px;top:66.90px">48 89 4C 24 08 48 89 54 24 10 4C 89 44 24 18 4C</div>
<div class="m" style="left:511px;top:66.90px">H.L$</div>
<div class="m" style="left:7px;top:83.20px;color:#2B91AF">FFFFF802695FDDF0</div>
<div class="m" style="left:138px;top:83.20px">89 4C 24 20 9C 48 83 EC 30 FA 65 48 8B 0C 25 20</div>
<div class="m" style="left:511px;top:83.20px">.L$ </div>
<div class="ab" style="left:534.1px;top:98.50px;width:7px;height:16px;background:#E2EEE2"></div>
<div class="m" style="left:7px;top:99.50px;color:#2B91AF">FFFFF802695FDE00</div>
<div class="m" style="left:138px;top:99.50px">00 00 00 48 8B 89 C0 85 00 00 E8 31 9B 00 00 65</div>
<div class="m" style="left:511px;top:99.50px">...H</div>
<div class="ab" style="left:511.0px;top:114.80px;width:7px;height:16px;background:#E2EEE2"></div>
<div class="m" style="left:7px;top:115.80px;color:#2B91AF">FFFFF802695FDE10</div>
<div class="m" style="left:138px;top:115.80px">48 8B 0C 25 20 00 00 00 48 81 C1 00 01 00 00 E8</div>
<div class="m" style="left:511px;top:115.80px">H..%</div>
</div>
<div class="ab" style="left:1903px;top:863px;width:15px;height:128px;background:#EEEEF2"></div>
<div class="sb" style="left:1903px;top:863px;width:15px;height:17px"></div>
<svg style="left:1906px;top:869px" width="9" height="5"><path d="M0 4.5H9L4.5 0Z" fill="#000"/></svg>
<div class="sb" style="left:1903px;top:919px;width:15px;height:17px"></div>
<div class="sb" style="left:1903px;top:974px;width:15px;height:17px"></div>
<svg style="left:1906px;top:980px" width="9" height="5"><path d="M0 0H9L4.5 4.5Z" fill="#000"/></svg>
<div class="ab" style="left:1368px;top:993px;width:533px;height:14px;background:#EEEEF2"></div>
<div class="sb" style="left:1368px;top:993px;width:17px;height:14px"></div>
<svg style="left:1374px;top:995px" width="5" height="9"><path d="M4.5 0V9L0 4.5Z" fill="#000"/></svg>
<div class="sb" style="left:1384px;top:993px;width:417px;height:14px"></div>
<div class="sb" style="left:1884px;top:993px;width:17px;height:14px"></div>
<svg style="left:1890px;top:995px" width="5" height="9"><path d="M0 0V9L4.5 4.5Z" fill="#000"/></svg>
<svg style="left:0;top:0" width="1920" height="1043"><g font-family="Liberation Sans" font-weight="bold" font-size="188" fill="rgb(189,224,193)" fill-opacity="0.686"><text x="671.65" y="0" transform="translate(0,497.8) scale(1,1.034)">XSS</text><text x="1048.2" y="0" transform="translate(0,498) scale(1,0.90)">.</text><text x="1099.3" y="0" transform="translate(0,498) scale(1,0.98)">is</text></g></svg>
<div class="ab" style="left:0px;top:1015px;width:1920px;height:25px;background:#007ACC"></div>
<svg style="left:1877px;top:1019px" width="30" height="20"><path d="M5 2H24V15H12L8 19V15H5Z" fill="#333" stroke="#fff" stroke-width="1"/></svg>
<div class="ab" style="left:0px;top:1040px;width:1920px;height:3px;background:#202020"></div>
<div class="ab" style="left:48px;top:1040px;width:287px;height:3px;background:#3C3C3C"></div>
<div class="ab" style="left:681px;top:1040px;width:48px;height:3px;background:#5A5F5F"></div>
<div class="ab" style="left:729px;top:1040px;width:49px;height:3px;background:#C57A2A"></div>
<div class="ab" style="left:778px;top:1040px;width:1142px;height:3px;background:#1F2434"></div>
</body></html>
